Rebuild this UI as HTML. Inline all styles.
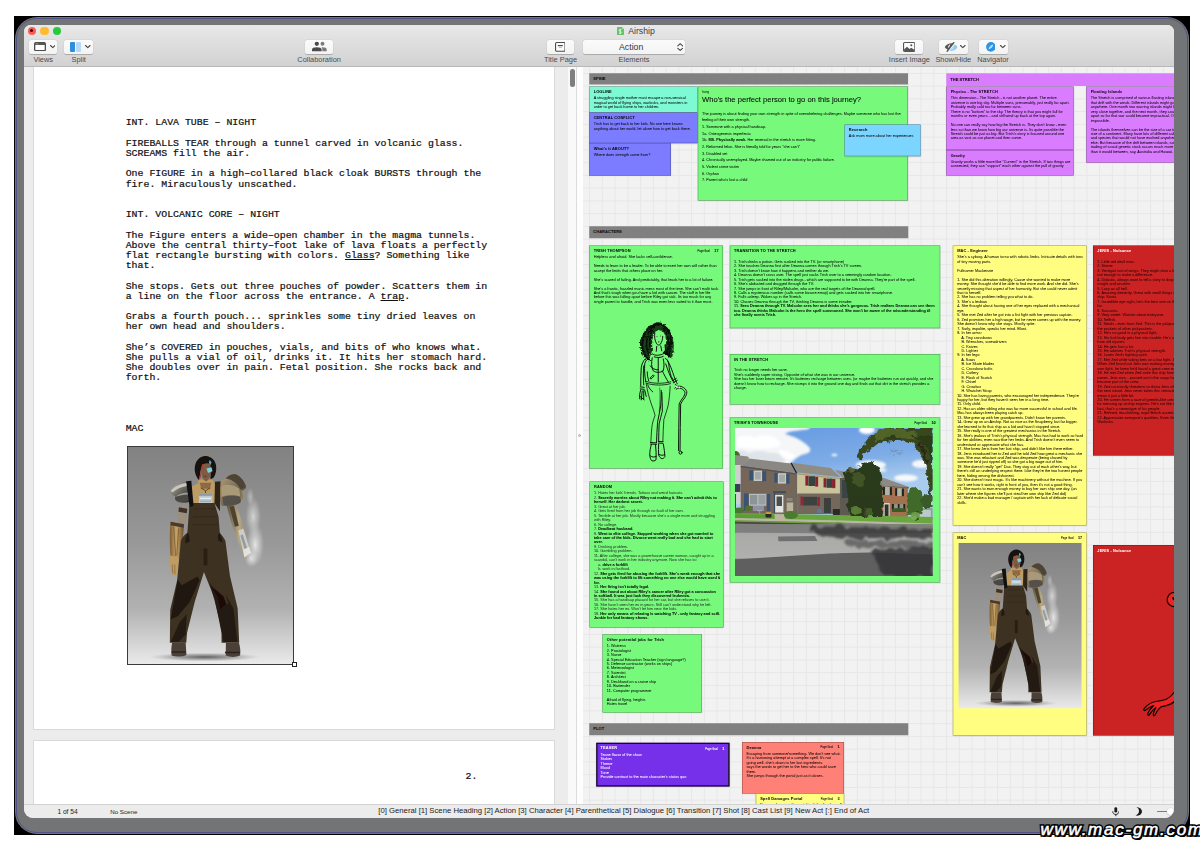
<!DOCTYPE html>
<html>
<head>
<meta charset="utf-8">
<title>Airship</title>
<style>
*{box-sizing:border-box;margin:0;padding:0}
html,body{width:1200px;height:843px;overflow:hidden;background:#fff}
body{font-family:"Liberation Sans",sans-serif;position:relative;color:#000}
.abs{position:absolute}
#blk{left:14px;top:16px;width:1176px;height:819px;background:#000}
#frm{left:15px;top:17px;width:1174px;height:817px;background:#727475;border-radius:22px}
#frl{left:16px;top:18px;width:1172px;height:815px;border:1px solid #4c4d88;border-radius:21px;opacity:.85}
#win{left:24px;top:25px;width:1150px;height:793px;border-radius:6.5px 6.5px 9px 9px;overflow:hidden;background:#ececec}
/* toolbar */
#tb{left:0;top:0;width:1150px;height:42px;background:linear-gradient(#e9e8e9,#d3d2d3);border-bottom:1px solid #b9b8b9}
.tl{width:8.2px;height:8.2px;border-radius:50%;top:2px}
.btn{top:15px;height:13.5px;background:linear-gradient(#fbfbfb,#f3f3f3);border-radius:2.5px;box-shadow:0 0.5px 0.7px rgba(0,0,0,.2),0 0 0 0.4px rgba(0,0,0,.05)}
.lbl{top:30px;font-size:7.4px;line-height:9px;color:#4a4a4a;text-align:center;white-space:nowrap;transform:translateX(-50%)}
/* left pane */
#lp{left:0;top:42px;width:552px;height:737px;background:#ececec;overflow:hidden}
.page{left:9px;width:521.5px;background:#fff;border:0.7px solid #d9d9d9}
.scr{font-family:"Liberation Mono",monospace;font-size:9.9px;line-height:10.2px;white-space:pre;color:#111;-webkit-text-stroke:0.22px #111}
/* board */
#bd{left:558.7px;top:42px;width:591.3px;height:737px;background-color:#f2f2f2;overflow:hidden;
background-image:linear-gradient(to right,#e7e7e7 0.9px,transparent 0.9px),linear-gradient(to bottom,#e7e7e7 0.9px,transparent 0.9px);background-size:12.75px 12.75px;background-position:6.1px 5.9px}
#bdi{position:absolute;left:0;top:0;width:2400px;height:3000px;transform:scale(.25);transform-origin:0 0}
.hd{background:#808080;font-size:16px;font-weight:bold;line-height:45px;padding-left:16px;color:#111;letter-spacing:.2px;-webkit-text-stroke:.3px #111}
.hp{background:#da7cff;color:#1a0a22;line-height:50px}
.cd{box-shadow:0 2px 5px rgba(0,0,0,.13);border:2.2px solid rgba(0,0,0,.42);font-size:15.28px;line-height:17.85px;padding:10.2px 15.4px;overflow:hidden;white-space:pre;color:#0a0a0a;-webkit-text-stroke:.12px currentColor}
.cd b.t{display:block;font-size:15.6px;letter-spacing:.5px;margin-bottom:7px}
.g{background:#77f97b}.aq{background:#7dfad4}.bl{background:#7b7cff}.lb{background:#7bd5ff}.pu{background:#da7cff}.ye{background:#fffe80}.rd{background:#cb2323;color:#2a0606}.sa{background:#ff8076}.vi{background:#7730ea;color:#fff}
.pg{position:absolute;right:16px;top:9px;font-size:10.5px;color:#111;-webkit-text-stroke:.2px #111}
.vi .pg,.vi .pg b{color:#fff;-webkit-text-stroke:.2px #fff}
.vi{padding:7.2px 12.4px}
.pg b{font-size:15.2px;margin-left:18px}
.ir{display:block;font-size:12.4px;line-height:17.8px}
.big{display:block;font-size:30.4px;line-height:36px;margin-top:4px;-webkit-text-stroke:.25px #0a0a0a}
.rt{line-height:26.7px;margin-top:24.8px}
.ph{position:absolute;left:19px;top:39.4px;width:791.5px;height:592px}
.tr{position:absolute;left:-2.2px;top:-2.2px;width:535.2px;height:892px}
.dim{color:#2c3a2c}.dim b{color:#000}
.wm{left:1040.500px;top:819.800px;font-style:italic;font-size:17px;line-height:20px;letter-spacing:1.750px;white-space:nowrap;color:#fff}
/* status */
#sb{left:0;top:779px;width:1150px;height:14px;background:#ececec;border-top:0.8px solid #d2d2d2;font-size:7.4px;line-height:11px;color:#222;white-space:nowrap}
</style>
</head>
<body>
<svg width="0" height="0" style="position:absolute">
<defs>
<linearGradient id="mbg" x1="0" y1="0" x2="0" y2="1"><stop offset="0" stop-color="#828282"/><stop offset=".45" stop-color="#999"/><stop offset=".75" stop-color="#b2b2b2"/><stop offset=".92" stop-color="#d8d8d8"/><stop offset="1" stop-color="#eaeaea"/></linearGradient>
<radialGradient id="mfl" cx=".5" cy=".5" r=".5"><stop offset="0" stop-color="#333" stop-opacity=".75"/><stop offset=".6" stop-color="#555" stop-opacity=".35"/><stop offset="1" stop-color="#888" stop-opacity="0"/></radialGradient>
<radialGradient id="mst" cx=".5" cy=".5" r=".5"><stop offset="0" stop-color="#f2f2f2" stop-opacity=".85"/><stop offset=".6" stop-color="#e0e0e0" stop-opacity=".4"/><stop offset="1" stop-color="#ccc" stop-opacity="0"/></radialGradient>
<linearGradient id="mgo" x1="0" y1="0" x2="1" y2="0"><stop offset="0" stop-color="#7a5c32"/><stop offset=".45" stop-color="#c9a468"/><stop offset="1" stop-color="#6a4e2a"/></linearGradient>
<linearGradient id="msh" x1="0" y1="0" x2="1" y2="1"><stop offset="0" stop-color="#bdbab1"/><stop offset=".45" stop-color="#6e6b63"/><stop offset="1" stop-color="#2e2c29"/></linearGradient>
<linearGradient id="msr" x1="0" y1="0" x2="1" y2="1"><stop offset="0" stop-color="#b5a27c"/><stop offset=".5" stop-color="#7d705a"/><stop offset="1" stop-color="#3a342b"/></linearGradient>
<linearGradient id="mar" x1="0" y1="0" x2="1" y2="0"><stop offset="0" stop-color="#5e5038"/><stop offset=".5" stop-color="#b7a885"/><stop offset="1" stop-color="#7c7365"/></linearGradient>
<symbol id="mac" viewBox="0 0 166 218" preserveAspectRatio="none">
<rect width="166" height="218" fill="url(#mbg)"/>
<ellipse cx="77" cy="211" rx="56" ry="4.500" fill="url(#mfl)"/>
<!-- steam -->
<ellipse cx="126" cy="70" rx="8" ry="20" fill="url(#mst)" opacity=".8"/>
<ellipse cx="128" cy="98" rx="9" ry="22" fill="url(#mst)"/>
<ellipse cx="124" cy="112" rx="7" ry="9" fill="url(#mst)" opacity=".9"/>
<ellipse cx="123" cy="50" rx="4" ry="9" fill="url(#mst)" opacity=".5"/>
<!-- right mech arm -->
<path d="M99 58l9-2 6 17 4 16 6 18-7 4-8-21-5-14z" fill="url(#mar)"/>
<path d="M111 84l5-2 8 25-7 4z" fill="#cfccc4"/>
<path d="M113 89l2.500-1 5 16-2.500 1z" fill="#8f9ea6"/>
<path d="M102 60l4.500-1 5 20-4 1z" fill="#4e432f"/>
<path d="M116 103l6-2.500 2 6-7 4z" fill="#e4e2dc"/>
<!-- right shoulder -->
<path d="M92.500 36c4-5 10-9 15-9.500 6 2 10 8 11.500 13.500-1 3-3 4-5 4 1 4 0 9-1 12-6 3-13 4-19 3-2-8-3-16-2-23z" fill="url(#msr)"/>
<path d="M98 31.500c3-3 6.500-4.500 10-4.500 5 2 9 7 10.500 13l-5 3c-3-6-8-10-15.500-11.500z" fill="#4e4436"/>
<path d="M94 39c6-2 13-1 18 3l1 8c-6-2-13-2-19 0z" fill="#a89978"/>
<path d="M95 50.500c6-2 12-2 18 0l-2 6.500c-5 2-11 2-15 1z" fill="#55514a"/>
<path d="M113 42c2 2 3 6 2.500 10l-2.500 1z" fill="#8a7a50"/>
<!-- left shoulder -->
<path d="M42.500 45c1-4 5-7.500 10-9 3-1 6-1.300 8.500-1l1.500 20c-4 1.500-9 1.500-13 0-2-1.500-2.500-3.500-2-5.500-2.500-.8-4.500-2.300-5-4.500z" fill="url(#msh)"/>
<path d="M43 44.500c3-4.500 9-7.500 17-8.500l.3 3c-6 1-11.500 3-15.300 6.500z" fill="#c9c7bf"/>
<path d="M47.500 51c2-3.500 7-5.500 13-5.500l.5 8.500c-5 1.500-10 1-13.500-1z" fill="#4a4844"/>
<path d="M48 50c3-3 7.500-4.300 12.500-4.300l.1 2c-5 0-9 1.300-12.600 2.300z" fill="#9d9b94"/>
<!-- left arm -->
<path d="M51 58l9 1-2.500 19-7.500-1c0-7 .5-13 1-19z" fill="#9c8d7c"/>
<path d="M51.200 60.500l8.500 1.500-.6 4.500-8.300-1.500z" fill="#3b332b"/>
<path d="M42.800 75l13.500 2.500c-.5 12-2.500 24-5 35l-8.500-1c-1-12-1-25 0-36.500z" fill="url(#mgo)"/>
<path d="M43 75l13.300 2.500-.4 3.500-13-2.500z" fill="#4a3a2a"/>
<path d="M46 80l2 30M51 82l-2 27" stroke="#6d5230" stroke-width=".7" fill="none"/>
<path d="M42 109l8.500 1.500c1 5 .5 11-1 16-1.500 3-3.500 3.500-5 1.500-2-5-3-12-2.500-19z" fill="#c09c62"/>
<path d="M44.500 118l.5 9M47 118l.3 10" stroke="#7a5c34" stroke-width=".6" fill="none"/>
<!-- neck/chest -->
<path d="M71 33l14 0 2 4c3 1 6 2 7 4l-2 17-27 0-2-17c2-2 5-3 7-4z" fill="#bf9c63"/>
<path d="M72 36l12 0-2 6-8 0z" fill="#8c6a42"/>
<path d="M73 41l5 3 5-3M78 44v3" stroke="#5a4026" stroke-width=".9" fill="none"/>
<rect x="71.300" y="46.500" width="13.600" height="10.500" fill="#b9c9cf"/>
<rect x="71.300" y="46.500" width="13.600" height="2.500" fill="#8a9aa0"/>
<rect x="72.500" y="51" width="11" height="1.200" fill="#e8f0f2"/>
<rect x="72.500" y="54" width="11" height="1" fill="#93a5ab"/>
<!-- overalls -->
<path d="M65.500 56.300h21.500l4.100 13.700 1.300 16.300c2.500 2.500 4.500 5.200 5.600 8.200l4.600 35 7.700 32.400 1.600 34.700-17.800 0 0-10.100-6.900-33.900-10.800-27-9.300 30.100-7.700 30.800-.8 10.100-16.500 0 .4-33.200 6.900-29.400 3.800-40c1.200-3.200 3.200-5.700 6.500-7.700l2-27z" fill="#3d3122"/>
<path d="M58.500 34.500l5.200-.5 2.300 25-4 1.500z" fill="#111"/>
<path d="M87.500 35l5.500-.5-.5 30-5.500-8z" fill="#2f2418"/>
<path d="M66 62l22 0M65.500 70h24M65 78h26" stroke="#2e2216" stroke-width=".5" fill="none"/>
<path d="M76 102h3.800v17H76z" fill="#2a1e14"/>
<path d="M60 86c-2 4-3 8-2 11l4-2c0-3 0-6-2-9zM92 86c2 4 3 7 3 10l-4-2c-1-3-1-5 1-8z" fill="#1c140d" opacity=".8"/>
<path d="M50 133l4 6 16-9 2 4-10 22-12 14-7 3z" fill="#1d150e" opacity=".9"/>
<path d="M52 176l7-8-1 20-7 8-8 0z" fill="#1d150e" opacity=".8"/>
<path d="M82 136l8 12 4 14 7-5-3-9 8 14 4 34-14 0-4-22-5-20z" fill="#1f1610" opacity=".85"/>
<path d="M84 140l6 10 3 13 6-5-3-8z" fill="#1a0808" opacity=".95"/>
<!-- boots -->
<path d="M44.500 196.500l13.500 0 .8 12.500c-4 2-10.500 2-15 .5-.5-4.500-.3-8.500.7-13z" fill="#4a4038"/>
<path d="M98.500 196.500l13 0c1.500 4.500 1.800 9 1.300 13-4.500 1.800-10 1.800-14.500 0z" fill="#4a4038"/>
<path d="M44 206h14M97.500 206.500h15" stroke="#2a231d" stroke-width="1.600"/>
<!-- head -->
<path d="M71.500 33.500c-4-5-5.500-11-3.500-17 2-5 6-7.500 10.500-7.500 5 .5 9 4 10 9 .8 5 0 9-2.500 13l-3 1.500 0-12-8-3-2 6z" fill="#151210"/>
<path d="M74.500 18.500c2-2.200 5.500-2.700 8.300-1.300l.9 8.500c-.5 4-2.300 7.300-4.700 8.800-2.800-.5-4.600-3.500-5-7.300z" fill="#7d5c43"/>
<path d="M74.500 17l1.200.3-2.700 14-1-.5z" fill="#b23a2a"/>
<path d="M79 21.500l5-1.200 1 4-4.500 1.800z" fill="#7fd0de"/>
<path d="M82 13l2 2-1 3-1.500-2z" fill="#58b6cf"/>
<path d="M76 29.500h3" stroke="#4d2f22" stroke-width=".7"/>
</symbol>
</defs>
</svg>
<div id="blk" class="abs"></div>
<div id="frm" class="abs"></div>
<div id="frl" class="abs"></div>
<div id="win" class="abs">

<!-- TOOLBAR -->
<div id="tb" class="abs">
  <div class="abs tl" style="left:3.6px;background:#fc5b57;top:1.7px"></div>
  <div class="abs" style="left:6.2px;top:4.2px;width:3px;height:3px;border-radius:50%;background:#3a0705"></div>
  <div class="abs tl" style="left:16.4px;background:#fdbc2e;top:1.7px"></div>
  <div class="abs tl" style="left:29.1px;background:#28c83f;top:1.7px"></div>

  <!-- title -->
  <svg class="abs" style="left:593px;top:2px" width="7" height="8.4" viewBox="0 0 7 8.4"><path d="M0.5 0h4.6l1.9 1.9v5.9a.6.6 0 0 1-.6.6H0.5a.5.5 0 0 1-.5-.5V.5A.5.5 0 0 1 .5 0z" fill="#69c26d"/><path d="M5.1 0v1.9H7z" fill="#b7e3b9"/><path d="M4.3 2.6c-1.2-.5-2 .1-2 .9 0 1 1.800.9 1.800 2 0 .7-.7 1.200-1.900.8M3.200 2v4.800" stroke="#fff" stroke-width=".8" fill="none"/></svg>
  <div class="abs" style="left:604.2px;top:0.5px;font-size:8.7px;line-height:11px;color:#3c3c3c">Airship</div>

  <!-- Views -->
  <div class="abs btn" style="left:4.7px;width:28.8px"></div>
  <svg class="abs" style="left:10px;top:17px" width="12" height="9.400" viewBox="0 0 12 9.4"><rect x=".65" y=".65" width="10.700" height="8.100" rx="1.300" fill="#fff" stroke="#4c4c4c" stroke-width="1.300"/><path d="M.6 1.500a.9.9 0 0 1 .9-.9h9a.9.9 0 0 1 .9.900v1.600H.6z" fill="#555"/><rect x="1.700" y="1.500" width="1" height=".8" fill="#cfcfcf"/><rect x="3.200" y="1.500" width="1" height=".8" fill="#cfcfcf"/></svg>
  <svg class="abs" style="left:25.6px;top:20.2px" width="5.600" height="3.400" viewBox="0 0 5.600 3.400"><path d="M.5.5l2.300 2.200L5.100.5" stroke="#444" stroke-width="1.05" fill="none" stroke-linecap="round" stroke-linejoin="round"/></svg>
  <div class="abs lbl" style="left:19.200px">Views</div>

  <!-- Split -->
  <div class="abs btn" style="left:40.200px;width:28.900px"></div>
  <div class="abs" style="left:46.300px;top:17px;width:4.700px;height:10px;border-radius:1px;background:#2e8fd8"></div>
  <div class="abs" style="left:52.200px;top:17px;width:4.700px;height:10px;border-radius:1px;background:#b5d9f7"></div>
  <svg class="abs" style="left:61px;top:20.200px" width="5.600" height="3.400" viewBox="0 0 5.600 3.400"><path d="M.5.5l2.300 2.200L5.100.5" stroke="#444" stroke-width="1.05" fill="none" stroke-linecap="round" stroke-linejoin="round"/></svg>
  <div class="abs lbl" style="left:54.700px">Split</div>

  <!-- Collaboration -->
  <div class="abs btn" style="left:281px;width:28.300px"></div>
  <svg class="abs" style="left:286.500px;top:16px" width="17" height="11" viewBox="0 0 17 11"><circle cx="5.800" cy="2.800" r="2.150" fill="#4a4a4a"/><path d="M1 10.300V8.600C1 7 2.800 6.200 5.800 6.200s4.800.8 4.800 2.400v1.700z" fill="#4a4a4a"/><circle cx="11.500" cy="2.800" r="1.950" fill="#7a7a7a"/><path d="M10.600 6.300c.3-.05.600-.1.900-.1 2.600 0 4.200.8 4.200 2.400v1.700h-4.400V8.600c0-.9-.2-1.700-.7-2.300z" fill="#7a7a7a"/></svg>
  <div class="abs lbl" style="left:295.100px">Collaboration</div>

  <!-- Title Page -->
  <div class="abs btn" style="left:523px;width:27px"></div>
  <svg class="abs" style="left:530.800px;top:16.800px" width="10.600" height="9.800" viewBox="0 0 10.600 9.800"><rect x=".55" y=".55" width="9.500" height="8.700" rx="1.200" fill="#fdfdfd" stroke="#4c4c4c" stroke-width="1.100"/><rect x="2.800" y="3" width="5" height="1.200" fill="#4c4c4c"/><rect x="3.800" y="5.200" width="3" height=".6" fill="#9a9a9a"/></svg>
  <div class="abs lbl" style="left:536.500px">Title Page</div>

  <!-- Action dropdown -->
  <div class="abs btn" style="left:559px;width:102px"></div>
  <div class="abs" style="left:595px;top:15.600px;font-size:8.750px;line-height:12px;color:#333">Action</div>
  <svg class="abs" style="left:652.800px;top:17.800px" width="6.400" height="8.200" viewBox="0 0 6.400 8.200"><path d="M.8 2.900L3.200.7l2.400 2.200M.8 5.300l2.400 2.200 2.400-2.200" stroke="#444" stroke-width="1.05" fill="none" stroke-linecap="round" stroke-linejoin="round"/></svg>
  <div class="abs lbl" style="left:610px">Elements</div>

  <!-- Insert Image -->
  <div class="abs btn" style="left:871.200px;width:27.700px"></div>
  <svg class="abs" style="left:878.800px;top:16.600px" width="12.400" height="10" viewBox="0 0 12.400 10"><rect x=".55" y=".55" width="11.300" height="8.900" rx="1.100" fill="#fdfdfd" stroke="#555" stroke-width="1.100"/><path d="M1.100 8.900V7.300l2.900-2.600 2.500 2.200 1.700-1.200 3.100 2.100v1.100z" fill="#555"/><circle cx="8.300" cy="3.300" r="1.050" fill="#555"/></svg>
  <div class="abs lbl" style="left:885.400px">Insert Image</div>

  <!-- Show/Hide -->
  <div class="abs btn" style="left:915.200px;width:28.500px"></div>
  <svg class="abs" style="left:920px;top:16px" width="14" height="11.500" viewBox="0 0 14 11.500"><path d="M.7 6C2 3.600 4.800 2.300 8 2.200L9.700 1l1.100.6-7.300 9.400-1.300-.5 1.400-1.900C2.300 8 1.300 7.100.7 6z" fill="#555"/><path d="M4.300 6.900c-.5-1.600.3-3.100 2.100-3.600L5.100 6.200z" fill="#f4f4f4"/><path d="M10.700 3.600c1.200.6 2.100 1.500 2.700 2.600-1.100 2.200-3.600 3.700-6.800 3.700-.3 0-.6 0-.9-.1z" fill="#8fcaf3"/><path d="M9.600 5.200c.6 1.300.1 2.800-1.200 3.500-.4.200-.9.300-1.300.3z" fill="#bfe2fa"/></svg>
  <svg class="abs" style="left:936.300px;top:20.200px" width="5.600" height="3.400" viewBox="0 0 5.600 3.400"><path d="M.5.500l2.300 2.200L5.100.5" stroke="#444" stroke-width="1.05" fill="none" stroke-linecap="round" stroke-linejoin="round"/></svg>
  <div class="abs lbl" style="left:929.300px">Show/Hide</div>

  <!-- Navigator -->
  <div class="abs btn" style="left:955px;width:28.500px"></div>
  <svg class="abs" style="left:961.500px;top:16.900px" width="9.800" height="9.800" viewBox="0 0 9.800 9.800"><circle cx="4.900" cy="4.900" r="4.800" fill="#2d93e3"/><path d="M7.300 2.500L5.700 5.700 2.500 7.300 4.100 4.100z" fill="#fff"/><circle cx="4.900" cy="4.900" r=".7" fill="#2d93e3"/></svg>
  <svg class="abs" style="left:976.200px;top:20.200px" width="5.600" height="3.400" viewBox="0 0 5.600 3.400"><path d="M.5.500l2.300 2.200L5.100.5" stroke="#444" stroke-width="1.05" fill="none" stroke-linecap="round" stroke-linejoin="round"/></svg>
  <div class="abs lbl" style="left:969px">Navigator</div>
</div>

<!-- LEFT PANE -->
<div id="lp" class="abs">
  <div class="abs page" style="top:-3px;height:666.4px"></div>
  <div class="abs page" style="top:673.4px;height:80px"></div>
  <div class="abs scr" style="left:101.700px;top:51.300px">INT. LAVA TUBE – NIGHT

FIREBALLS TEAR through a tunnel carved in volcanic glass.
SCREAMS fill the air.

One FIGURE in a high–collared black cloak BURSTS through the
fire. Miraculously unscathed.


INT. VOLCANIC CORE – NIGHT

The Figure enters a wide–open chamber in the magma tunnels.
Above the central thirty–foot lake of lava floats a perfectly
flat rectangle bursting with colors. <u>Glass</u>? Something like
that.

She stops. Gets out three pouches of powder. Scatters them in
a line on the floor across the entrance. A <u>trap</u>.

Grabs a fourth pouch... sprinkles some tiny dried leaves on
her own head and shoulders.

She’s COVERED in pouches, vials, and bits of who knows what.
She pulls a vial of oil, drinks it. It hits her stomach hard.
She doubles over in pain. Fetal position. She rocks back and
forth.




MAC</div>
  <div class="abs" style="left:103.300px;top:378.500px;width:167px;height:219px;border:0.8px solid #3a3a3a;background:#999"><svg width="100%" height="100%" style="display:block"><use href="#mac" width="100%" height="100%"/></svg></div>
  <div class="abs" style="left:267.500px;top:594.500px;width:5px;height:5px;border:0.8px solid #222;background:#fff"></div>
  <div class="abs scr" style="left:441.500px;top:704.500px">2.</div>
</div>

<!-- DIVIDER -->
<div class="abs" style="left:543.8px;top:42px;width:8.5px;height:737px;background:#f9f9f9"></div>
<div class="abs" style="left:552.2px;top:42px;width:6.5px;height:737px;background:#fdfdfd;border-left:0.7px solid #dcdcdc"></div>

<div class="abs" style="left:545.600px;top:44.200px;width:5px;height:18px;border-radius:2.500px;background:#7e7e7e"></div>
<div class="abs" style="left:553.900px;top:408.700px;width:3.600px;height:3.600px;border-radius:50%;background:#d8d8d8;border:0.800px solid #b0b0b0"></div>
<!-- BOARD -->
<div id="bd" class="abs">
<!--BOARD-START-->
<div id="bdi">
<div class="abs hd" style="left:25.2px;top:25.2px;width:1274.8px;height:45.2px">SPINE</div>
<div class="abs hd hp" style="left:1453.2px;top:25.2px;width:936px;height:50.4px">THE STRETCH</div>
<div class="abs cd aq" style="left:25.2px;top:77.6px;width:434px;height:104px"><b class="t">LOGLINE</b>A struggling single mother must escape a non-sensical
magical world of flying ships, warlocks, and monsters in
order to get back home to her children.</div>
<div class="abs cd bl" style="left:25.2px;top:181.6px;width:434px;height:123.6px"><b class="t">CENTRAL CONFLICT</b>Trish has to get back to her kids. No one here knows
anything about her world, let alone how to get back there.</div>
<div class="abs cd bl" style="left:25.2px;top:305.2px;width:326.8px;height:129.6px"><b class="t">What's it ABOUT?</b>Where does strength come from?</div>
<div class="abs cd g" style="left:458.8px;top:77.6px;width:841.2px;height:456px"><span class="ir">Irony</span><span class="big">Who's the perfect person to go on this journey?</span><div class="rt">The journey is about finding your own strength in spite of overwhelming challenges. Maybe someone who has lost the
feeling of their own strength.
1. Someone with a physical handicap.
1a. Osteogenesis imperfecta
1b. <b>MS. Physically weak.</b> Her reversal in the stretch is more fitting.
2. Reformed felon. She is literally told for years "she can't"
3. Disabled vet
4. Chronically unemployed. Maybe shamed out of an industry for public failure.
5. Violent crime victim
6. Orphan
7. Parent who's lost a child</div></div>
<div class="abs cd lb" style="left:1046px;top:229.6px;width:304.8px;height:127.6px"><b class="t">Research</b>Ask mom more about her experiences</div>
<div class="abs cd pu" style="left:1453.2px;top:77.6px;width:510px;height:254.4px"><b class="t">Physics - The STRETCH</b>This dimension - The Stretch - is not another planet. The entire
universe is one big sky. Multiple suns, presumably, just really far apart.
Probably really cold too far between suns.
There is no "bottom" to the sky. The theory is that you might fall for
months or even years... and still wind up back at the top again.

No one can really say how big the Stretch is. They don't know - even
less so than we know how big our universe is. Its quite possible the
Stretch could be just as big. But Trish's story is focused around one
area as vast as our planet and then some.</div>
<div class="abs cd pu" style="left:1453.2px;top:332px;width:510px;height:101.6px"><b class="t">Gravity</b>Gravity works a little more like "Current" in the Stretch. If two things are
connected, they can "support" each other against the pull of gravity</div>
<div class="abs cd pu" style="left:2013.2px;top:77.6px;width:384px;height:305.6px"><b class="t">Floating Islands</b>The Stretch is comprised of various floating islands
that drift with the winds. Different islands might go
anywhere. One month two warring islands might be
very close together, and the next month, they could be
apart so far that war could become impractical. Or
impossible.

The islands themselves can be the size of a car to the
size of a continent. Many have lots of different cultures
and species that would not have evolved anywhere
else. But because of the drift between islands, social
trading of social genetic stock occurs much more often
than it would between, say, Australia and Hawaii.</div>
<div class="abs hd" style="left:25.2px;top:636.8px;width:1274.8px;height:46px">CHARACTERS</div>
<div class="abs cd g" style="left:25.2px;top:713.6px;width:535.2px;height:892px"><span class="pg">Page Goal<b>17</b></span><b class="t">TRISH THOMPSON</b>Helpless and afraid. She lacks self-confidence.

Needs to learn to be a leader. To be able to exert her own will rather than
accept the limits that others place on her.

She's scared of failing. And predictably, that leads her to a lot of failure.

She's a frantic, frazzled manic mess most of the time. She can't multi task.
And that's tough when you have a kid with cancer. The stuff in her life
before this was falling apart before Riley got sick. Its too much for any
single parent to handle, and Trish was even less suited to it than most.<svg class="tr" viewBox="589 245.400 133.800 223" preserveAspectRatio="none">
<defs><filter id="tcurl" x="-30%" y="-30%" width="160%" height="160%"><feTurbulence type="fractalNoise" baseFrequency=".45" numOctaves="2" seed="3" result="n"/><feDisplacementMap in="SourceGraphic" in2="n" scale="3.600" xChannelSelector="R" yChannelSelector="G"/></filter></defs>
<!-- hair -->
<g filter="url(#tcurl)" fill="none" stroke="#070b07" stroke-linecap="round">
<path d="M659 324c-5-1-10 1-13 5-4 5-6 11-5.500 17 .5 5 2 9 5 12l3 3c1-3 2-6 3-9 .5-3 .5-6 .5-9 0-4 1-8 3-11 2-2 5-2 7-1 3 3 4 7 4 11-.5 4-1 7-2 10 1 2 3 4 5 5 1 1 2 1 3 0 1-3 1.500-7 1.500-11 0-5-1-9-3-13-2-5-6-8-12-9z" fill="#070b07" stroke="none" opacity=".8"/>
<path d="M658 324.500c-5 0-9 3-12 7-3 5-4 10-4 15" stroke-width="1.700"/>
<path d="M655 326c-4 2-7 6-8 11-1 5-1 10 0 15" stroke-width="1.500"/>
<path d="M652.500 329c-2 4-3 9-3 14 0 4 0 8-1 12" stroke-width="1.400"/>
<path d="M642 344c0 5 1.500 10 5 14M644 352c1 4 3 7 5 9" stroke-width="1.500"/>
<path d="M640.500 340c-.5 6 .5 12 3 17" stroke-width="1.200"/>
<path d="M659 324c4 1 7 3 9 7 2 4 3 9 3 14" stroke-width="1.600"/>
<path d="M663 328c3 3 4.500 7 5 12 .5 5 0 9-1 13" stroke-width="1.500"/>
<path d="M665 345c0 4 1 8 3.500 11M669.500 343c.5 5 0 10-1.500 14" stroke-width="1.400"/>
<path d="M664 352c1 2 3 4 5 5" stroke-width="1.300"/>
<path d="M653 325c3-2 7-2 10 0" stroke-width="1.600"/>
</g>
<g fill="none" stroke="#060c07" stroke-width=".95" stroke-linecap="round" stroke-linejoin="round">
<!-- face -->
<path d="M654.500 333c-.5 4 0 8 2 11 1 1.500 2.500 1.500 3.500.5 1.500-2 2.500-5 2.500-8"/>
<path d="M656.500 346.500l-.5 5M660.500 346l1 5"/>
<!-- neck/collar -->
<path d="M652 354c3 2 7 2 12-.5M654 357c3 1 6 1 9-.5"/>
<!-- torso -->
<path d="M649 358c-2 1-4 3-4.500 6-.5 6 0 12 1 18M665 358.500c2 1 3 3 3.500 6 .5 4 1 8 2.500 12 1 2 2 4 3 6"/>
<path d="M652 358c-1 5-1 9 1 13 3 2 7 2 10 0 1-4 1-8 0-12"/>
<path d="M650 366c2 3 5 4 8 4M658 358v24M662 371c2 4 4 8 6 11"/>
<path d="M647 372c0 3 .5 6 1.500 9M650 378l3-3 1 1-3 3z"/>
<path d="M645.500 381.500c8 2.500 17 2.500 25 .5M645.800 383.300c8 2.500 17 2.500 24.500.5" stroke-width=".8"/>
<!-- left arm -->
<path d="M645 359c-2 2-3.500 5-4 9-.5 6-.5 12-.5 18M643.500 366c-.5 6-.5 12 0 19"/>
<path d="M640 387l4 .5M640 389l4 .5M640.500 390c-1 3-1.500 6-1 9M642 391l-1 9M643.500 391l0 8M644.500 390.500l1.500 6M639 396l5 4"/>
<!-- right arm -->
<path d="M667 360c3 5 5 11 7 17 1 3 2 5 3 7M665.500 364c2 6 4 12 7 17"/>
<path d="M672 381l4-2.500M673 383l4-2.500M675 384.500c1 .5 2 1.500 3 3"/>
<!-- legs -->
<path d="M646 384c1 7 3 14 5 20 1.500 4 3 8 3.800 11.500-1.500 4-2.800 8-3.200 12-.5 5-.8 10-1 15.200" stroke-width=".75"/>
<path d="M647.500 385c1 3 2.500 5 5 7M661 390.500c0 5.500-.2 10.500-.5 15.600-.8 5.400-2.200 10.500-3.100 15.700-.6 7-.9 14-1.100 20.900"/>
<path d="M669.900 386.300c-.3 7-1 13.500-2.100 19.800-1.200 4.700-2.800 9.200-4.200 13.600-.5 7.300-.8 14.600-1 21.900" stroke-width=".75"/>
<path d="M661.600 392.500c.3 6.300.4 12.600.5 18.800-1 4.200-2.300 8.400-3.200 12.600-.3 5.900-.4 11.800-.5 17.700"/>
<path d="M659.500 388c.5 8 .3 16-.5 24" stroke-width=".5"/>
<path d="M650.400 442.700l6 .3M650.300 444.200l6 .3M658.300 441.600l4.400.2M658.300 443.200l4.400.2"/>
<!-- feet -->
<path d="M651.100 444.500c-1 3.500-1.600 7-1.600 10.700.2 2.500.9 4.500 2.100 5.700 1.500.5 3 .2 4.200-1 .3-5 0-10-.5-15M650 456c2 1.500 4 1.500 6 .5"/>
<path d="M658.400 444c-.2 3.700-.2 7.500 0 11.200.8 1.900 1.900 3.100 3.200 3.700 1.300-.2 2.400-.9 3.100-2.100-.3-4.200-.8-8.400-1.600-12.600M658.600 454.500c2 1.200 4 1.200 5.800.3"/>
<!-- cane -->
<path d="M674.500 388.300c2-2 4.500-2.500 7-1.500 2.500 1 4.500 3 5 5 .3 2.200-.8 4.200-2 6.200-1.600 2-3.200 4-4.100 6.200-.3 15.600-.5 31.200-.6 46.800"/>
<path d="M676 389.300c1.500-1 3.500-1.300 5-.6 2 1 3.200 2.300 3.700 3.800.1 1.700-.7 3.400-1.800 5.100-1.600 2.100-3.200 4.300-4 6.600-.3 15.500-.5 31-.6 46.500"/>
<circle cx="680.300" cy="452.800" r="1.500"/>
</g>
<circle cx="676.500" cy="387" r="1" fill="#e8f4e8"/><circle cx="679" cy="387.600" r=".9" fill="#e8f4e8"/>
<circle cx="656.800" cy="336.600" r=".55" fill="#5a2a6a"/><circle cx="660.300" cy="336.200" r=".55" fill="#5a2a6a"/><ellipse cx="658.600" cy="342" rx=".6" ry=".9" fill="#5a1a4a"/>
</svg>
</div>
<div class="abs cd g" style="left:586.8px;top:713.6px;width:842px;height:331.6px"><b class="t">TRANSITION TO THE STRETCH</b>
1. Trish drinks a potion. Gets sucked into the TV. (or smartphone)
2. She touches Deanna first after Deanna comes through Trish's TV screen.
3. Trish doesn't know how it happens and neither do we.
4. Deanna doesn't cross over. The spell just sucks Trish over to a seemingly random location.
5. Trish gets sucked into the stolen drugs - which are supposed to be with Deanna. They're part of the spell.
6. She's abducted and dragged through the TV.
7. She jumps in front of Riley/Malcolm, who are the real targets of the Deanna/spell.
8. Calls a mysterious number (calls some bizarre emoji) and gets sucked into her smartphone.
9. Falls asleep. Wakes up in the Stretch.
10. Chases Deanna through the TV, thinking Deanna is some intruder.
11. <b>Sees Deanna through TV. Malcolm sees her and thinks she's gorgeous. Trish realizes Deanna can see them
too. Deanna thinks Malcolm is the hero the spell summoned. She won't be aware of the misunderstanding til
she finally meets Trish.</b></div>
<div class="abs cd g" style="left:586.8px;top:1147.6px;width:842px;height:202px"><b class="t">IN THE STRETCH</b>
Trish no longer needs her cane.
She's suddenly super strong. Opposite of what she was in our universe.
She has her laser beam remote. It's batteries recharge between uses. (or maybe the batteries run out quickly, and she
doesn't know how to recharge. She stomps it into the ground one day and finds out that dirt in the stretch provides a
charge.</div>
<div class="abs cd g" style="left:586.8px;top:1402.4px;width:842px;height:660.4px"><span class="pg">Page Goal<b>10</b></span><b class="t">TRISH'S TOWNHOUSE</b><svg class="ph" viewBox="0 0 198 148" preserveAspectRatio="none">
<defs>
<linearGradient id="hsky" x1="0" y1="0" x2="0.300" y2="1"><stop offset="0" stop-color="#6498e1"/><stop offset=".45" stop-color="#7eace6"/><stop offset=".7" stop-color="#a9cbee"/></linearGradient>
<filter id="hb1" x="-20%" y="-20%" width="140%" height="140%"><feGaussianBlur stdDeviation="1.300"/></filter>
<filter id="hb2" x="-20%" y="-20%" width="140%" height="140%"><feGaussianBlur stdDeviation=".6"/></filter>
<filter id="hb3" x="-20%" y="-20%" width="140%" height="140%"><feGaussianBlur stdDeviation=".35"/></filter>
<filter id="hb4" x="-20%" y="-20%" width="140%" height="140%"><feGaussianBlur stdDeviation="2"/></filter>
<linearGradient id="hrd" x1="0" y1="0" x2="0" y2="1"><stop offset="0" stop-color="#7d7d7d"/><stop offset=".16" stop-color="#858585"/><stop offset=".2" stop-color="#a9a9a8"/><stop offset=".66" stop-color="#b0b0af"/><stop offset=".7" stop-color="#686868"/><stop offset="1" stop-color="#585858"/></linearGradient>
<filter id="hfo" x="-20%" y="-20%" width="140%" height="140%"><feTurbulence type="fractalNoise" baseFrequency=".16" numOctaves="2" seed="4" result="n"/><feDisplacementMap in="SourceGraphic" in2="n" scale="7" xChannelSelector="R" yChannelSelector="G"/><feGaussianBlur stdDeviation=".35"/></filter>
<filter id="hsh" x="-20%" y="-20%" width="140%" height="140%"><feTurbulence type="fractalNoise" baseFrequency=".11" numOctaves="2" seed="9" result="n"/><feDisplacementMap in="SourceGraphic" in2="n" scale="9" xChannelSelector="R" yChannelSelector="G"/><feGaussianBlur stdDeviation=".8"/></filter>
<clipPath id="hcl"><rect width="198" height="148"/></clipPath>
</defs>
<g clip-path="url(#hcl)">
<rect width="198" height="100" fill="url(#hsky)"/>
<!-- clouds -->
<g filter="url(#hb1)">
<path d="M-4-3h78c3 2 1 5-6 5-8 1-14 1-18 4 8 2 17 6 23 12 4 3 3 7-3 8-5 1-9 4-13 8-3 4-9 5-15 4L18 33C10 31 4 29-4 29z" fill="#f4f6f8"/>
<path d="M0 24c6-2 10-2 14 1 6-3 14-3 20 0 6-1 12 1 18 4l-6 8-46-6z" fill="#dfe4ea"/>
<path d="M2 10c5-3 12-3 18 0 6-4 14-4 20 0 4 2 6 5 5 8-10 3-28 3-43 1z" fill="#fff"/>
<path d="M44 22c6 0 12 2 16 6 0 2-3 3-8 3-5-1-8-4-8-9z" fill="#fff"/>
<ellipse cx="136" cy="37" rx="15" ry="4.500" fill="#f4f7fa"/><ellipse cx="146" cy="42" rx="6" ry="2" fill="#e6eef6"/>
<ellipse cx="186" cy="36" rx="9" ry="4" fill="#f4f7fa"/>
<ellipse cx="171" cy="50" rx="12" ry="3.500" fill="#f6f8fb"/>
<ellipse cx="99.500" cy="27" rx="3" ry="1.200" fill="#f4f7fa"/>
<ellipse cx="132" cy="2" rx="8" ry="4" fill="#fff"/>
</g>
<!-- far left green -->
<path d="M0 23c3 0 5 2 5 5H0z" fill="#4a6a2a"/>
<!-- roofs -->
<path d="M0 27l13 1.500 1 2-6 7.500-8-1z" fill="#8e8b86"/>
<path d="M14 30.500l42 5 5 9.500-53-7.200z" fill="#8b8883"/>
<path d="M55.500 35l1.500-.3 5.500 10-1.700.4z" fill="#222"/>
<path d="M57 34.800l39 5.300 10 9.200-44-5z" fill="#8f8c84"/>
<path d="M100 42l14 2 3 8-8-.8z" fill="#908d87"/>
<path d="M116 46.500l33 3.600 25 9-24-1.500-33-4z" fill="#8d8983"/>
<!-- left edge white house -->
<rect x="0" y="37" width="6" height="39" fill="#cfcfd2"/><rect x="0" y="56" width="5.500" height="8" fill="#3a3f52"/>
<rect x="0" y="66" width="1" height="22" fill="#8a2a2a"/>
<!-- brick house left -->
<path d="M5.700 37.800l55.500 7.500V86H5.700z" fill="#75665a"/>
<path d="M5.700 37.800l55.500 7.500v1.400L5.700 39.200z" fill="#5e534b"/>
<g filter="url(#hb3)">
<rect x="14.300" y="42.300" width="4.200" height="10" fill="#3b5272"/><rect x="18.700" y="42.600" width="8.400" height="10.400" fill="#c6cac6"/><rect x="20" y="44" width="5.800" height="7.500" fill="#a4aaa8"/><rect x="27.400" y="43.200" width="3.800" height="10" fill="#3b5272"/>
<rect x="39.400" y="44.800" width="3.400" height="9.800" fill="#3b5272"/><rect x="42.900" y="45.200" width="8.300" height="10.400" fill="#c6cac6"/><rect x="44.200" y="46.600" width="5.800" height="7.500" fill="#a4aaa8"/><rect x="51.300" y="46" width="3.200" height="9.800" fill="#3b5272"/>
<rect x="9" y="65.500" width="4.500" height="17" fill="#3b5272"/><rect x="14" y="65.800" width="17.500" height="12" fill="#b9bec0"/><rect x="15" y="67" width="7.300" height="9.500" fill="#8d9496"/><rect x="23.500" y="67" width="7" height="9.500" fill="#9aa0a2"/><rect x="31.700" y="66" width="3.600" height="17" fill="#3b5272"/>
<rect x="18" y="78" width="11" height="5" fill="#8b93a8"/>
<rect x="38" y="63.200" width="13" height="2" fill="#3a4e63"/><rect x="38.800" y="65" width="1.400" height="20" fill="#3a4e63"/>
<rect x="40.200" y="67" width="8.200" height="17.500" fill="#e4e4e2"/><rect x="41.600" y="68.500" width="5.400" height="9.500" fill="#4a4f4c"/>
<rect x="51.700" y="74.500" width="6.500" height="9" fill="#b8b49c"/><rect x="51.500" y="70" width="6" height="3" fill="#9a9694" opacity=".6"/>
</g>
<rect x="60.500" y="45" width="2" height="41" fill="#6e665e"/>
<!-- cream house -->
<path d="M62.200 45l44 5v16.500h-44z" fill="#c9c49c"/>
<path d="M62.200 45l44 5v1.500l-44-5z" fill="#a6a07e"/>
<path d="M62.200 65.500h44V86h-44z" fill="#74685c"/>
<g filter="url(#hb3)">
<rect x="70.400" y="47.800" width="3" height="9.800" fill="#8b2231"/><rect x="73.500" y="48.200" width="6.600" height="9.800" fill="#39423f"/><rect x="80.200" y="48.800" width="3" height="9.800" fill="#8b2231"/>
<rect x="88.600" y="50.200" width="2.800" height="9.200" fill="#8b2231"/><rect x="91.500" y="50.600" width="6" height="9.200" fill="#39423f"/><rect x="97.600" y="51" width="2.700" height="9.200" fill="#8b2231"/>
<rect x="97.200" y="51" width="3" height="8.600" fill="#8b2231"/>
<rect x="65.500" y="68.500" width="2.600" height="9" fill="#8b2c36"/><rect x="68.200" y="68.800" width="14" height="8.700" fill="#3e4340"/><rect x="82.400" y="69" width="2.600" height="9" fill="#8b2c36"/>
<rect x="89" y="70" width="7" height="15" fill="#3b403c"/>
<rect x="82.500" y="81" width="4" height="4" fill="#5a78c0" opacity=".8"/>
<rect x="98" y="81" width="7" height="6" fill="#2a2c2a"/>
</g>
<path d="M105 50h30v40h-30z" fill="#5d5a52"/><path d="M107 52h7v18h-7z" fill="#3a4444"/><rect x="114" y="58" width="5" height="7" fill="#a9b0a6"/>
<!-- right brick house -->
<path d="M133 57.500l40 2V90h-40z" fill="#a37150"/>
<path d="M116 53.500l34 4 24 1.500v1.500l-58-5z" fill="#6e675e"/>
<g filter="url(#hb3)">
<rect x="148" y="58.800" width="2" height="8" fill="#20221f"/><rect x="150.200" y="59" width="4.600" height="8" fill="#aeb6aa"/><rect x="155" y="59.200" width="2" height="8" fill="#20221f"/>
<rect x="160.300" y="60.200" width="2" height="7.600" fill="#20221f"/><rect x="162.400" y="60.400" width="4.400" height="7.600" fill="#aeb6aa"/><rect x="167" y="60.600" width="2" height="7.600" fill="#20221f"/>
<rect x="148.600" y="75" width="6.200" height="14" fill="#d4d4cc"/><rect x="149.800" y="76.500" width="3.800" height="11.500" fill="#2c332c"/>
<rect x="157" y="76" width="2" height="6.500" fill="#20221f"/><rect x="159.200" y="76.200" width="3.600" height="6" fill="#8e968a"/><rect x="163" y="76" width="1.800" height="6.500" fill="#20221f"/><rect x="164.800" y="76.200" width="3.600" height="6" fill="#8e968a"/><rect x="168.500" y="76" width="1.800" height="6.500" fill="#20221f"/>
<path d="M157 81c4-1.500 9-1.500 14 0v3h-14z" fill="#3a5a28"/>
</g>
<!-- far right bg -->
<rect x="176" y="80" width="22" height="12" fill="#8aa0a0"/><rect x="185" y="82" width="11" height="8" fill="#bcc8cc"/>
<!-- grass -->
<path d="M0 85l198 4v12H0z" fill="#6aa63e"/>
<path d="M0 86.500l40 .5v4L0 90z" fill="#5f9a38"/>
<!-- sidewalk -->
<path d="M0 90l100 2.300 98 3.200v2l-98-3-100-2z" fill="#b9b6a8"/>
<path d="M39.500 86l9.500.3 2 6.800-11-.3z" fill="#beb5a1"/>
<path d="M0 92.200l100 2.300 98 3.500v2.500L0 95z" fill="#6c9c3e"/>
<!-- road -->
<path d="M0 95l100 2.200 98 4.300V148H0z" fill="url(#hrd)"/>
<path d="M0 93.800l100 2.200 98 4.500v1.600l-98-4.400L0 95.600z" fill="#4b463c"/>
<path d="M0 131.500l95-6 40-1 63 2v22H0z" fill="#5e5e5e" filter="url(#hb2)"/>
<path d="M0 96h198v9l-98 .5L0 104.500z" fill="#7f7f7f" opacity=".9" filter="url(#hb2)"/>
<path d="M43 108.500l37-.5 2.500 5-39 .3z" fill="#707070" filter="url(#hb3)"/>
<!-- tree shadows on road -->
<g filter="url(#hsh)" fill="#343435">
<path d="M76 98l122 3v9c-10 1-20 0-30-1-10 2-22 2-32 1-10 2-24 1-34-1-10 0-20-2-26-5z" opacity=".8"/>
<path d="M110 113c10-2 22-1 30 1 10-2 24-2 34 0 8-1 16-1 24 0v6c-10 1-20 1-30-1-10 2-22 2-32 0-8 1-18 0-26-2z" opacity=".55"/>
<path d="M136 123c8-2 16-2 22 0 8-3 20-4 40-4v29h-48c-4-6-6-12-8-16-3-3-6-6-6-9z" opacity=".85"/>
</g>
<!-- bushes & planting -->
<g filter="url(#hb2)">
<ellipse cx="56" cy="87" rx="7" ry="4" fill="#4d7a30"/>
<ellipse cx="4" cy="82.500" rx="5" ry="3" fill="#4c7434"/><ellipse cx="13.500" cy="80.500" rx="3.300" ry="3" fill="#55702f"/>
<rect x="30.500" y="85.500" width="6" height="4" rx="1" fill="#2c2c24"/><rect x="30.800" y="84.200" width="5.500" height="1.800" fill="#c9a23a"/>
<rect x="22" y="82" width="5" height="1.200" fill="#b0a898"/><rect x="24" y="83" width="1.200" height="3.500" fill="#9a9284"/>
</g>
<!-- center tree -->
<g filter="url(#hfo)">
<path d="M109 44c3-3 8-4 12-3 3-4 9-7 14-7 5 1 9 5 10 10 3 3 3 8 1 11 3 4 3 10 1 14 2 5 2 12 0 19H117c-2-6-3-12-2-18-3-3-4-8-2-12-4-3-6-9-4-14z" fill="#2c3a1c"/>
<path d="M118 47c3-3 7-3 10-1 3 3 3 8 0 11-4 2-8 1-10-2-2-3-2-6 0-8z" fill="#4a5a2c" opacity=".8"/>
<path d="M112 42c3-2 6-2 9-1l-3 5c-3 0-5-1-6-4z" fill="#6a6a30" opacity=".8"/>
<path d="M114 70c8-3 22-3 32 0 3 6 3 12 1 18h-32c-2-6-3-12-1-18z" fill="#2b391c"/>
<ellipse cx="121" cy="82" rx="5" ry="4" fill="#587c34"/><ellipse cx="134" cy="84" rx="4" ry="4" fill="#3f5f28"/>
<rect x="129.500" y="80" width="1.800" height="10" fill="#4a4030"/>
</g>
<!-- right trees -->
<g filter="url(#hfo)">
<path d="M173 64c4-5 10-5 13 0 3 5 3 14 1 22-4 3-10 3-14 0-2-8-2-16 0-22z" fill="#416a2c"/>
<rect x="181.500" y="84" width="2.200" height="9" fill="#2e4a1e"/>
<ellipse cx="180" cy="88" rx="5" ry="3" fill="#7cae58" opacity=".8"/>
<path d="M186 70c3-4 8-5 12-4v14h-11z" fill="#3a5a2a"/>
</g>
<!-- top-right arching tree -->
<g filter="url(#hfo)">
<path d="M123 30c0-6 2-10 6-13 2-5 6-9 11-12 4-3 9-5 15-5h43v68c-3-3-5-7-5-11 2-5 1-10-2-14 1-6-2-12-6-17-3-6-8-10-14-12-6-3-13-3-19-1-6 0-11 2-15 7-5 2-8 6-10 11-2 1-3 1-4-1z" fill="#38461f"/><path d="M150 6c5-3 12-4 18-2l-2 8c-5-1-10 0-14 2z" fill="#2c3818" opacity=".8"/>
<path d="M140 4c6-3 14-4 22-3 8 0 16 2 22 6l-4 5c-8-3-16-4-24-3-6 0-12 2-16 5z" fill="#566a2a" opacity=".85"/>
<path d="M176 8c8 3 14 9 18 16l4 14v-30z" fill="#2c3a18"/>
<path d="M184 14l10 22" stroke="#2a2416" stroke-width="1.600"/>
<path d="M155 24c4-2 8-3 12-2M158 28c3-2 7-3 10-3" stroke="#55583e" stroke-width=".5" fill="none" opacity=".7"/>
<path d="M191 52c3 2 5 6 7 10v-16c-3 1-6 3-7 6z" fill="#33441e"/>
</g>
</g>
</svg>
</div>
<div class="abs cd ye" style="left:1479.2px;top:713.6px;width:535.6px;height:1120.4px"><b class="t">MAC - Engineer</b>She's a cyborg. A human torso with robotic limbs. Intricate details with tons
of tiny moving parts.

Fullname: Mackenzie

1. She did this alteration willingly. Cause she wanted to make more
money. She thought she'd be able to find more work. And she did. She's
secretly missing that aspect of her humanity. But she could never admit
that to herself.
2. She has no problem telling you what to do.
3. She's a lesbian
4. She thought about having one of her eyes replaced with a mechanical
eye.
5. She met Zed after he got into a fist fight with her previous captain.
6. Zed promises her a high wage, but he never comes up with the money.
She doesn't know why she stays. Mostly spite.
7. Surly, impolite, speaks her mind. Blunt.
8. In her arms:
    A. Tiny crossbows
    B. Wrenches, screwdrivers
    C. Knives
    D. Lighter
9. In her legs:
    A. Saws
    B. Ice Skate blades
    C. Crossbow bolts
    D. Cutlery
    E. Flask of Scotch
    F. Chisel
    G. Crowbar
    H. Wratchet Strap
10. She has loving parents, who encouraged her independence. They're
happy for her, but they haven't seen her in a long time.
11. Only child.
12. Has an older sibling who was far more successful in school and life.
Mac has always been playing catch up.
13. She grew up with her grandparents. Didn't know her parents.
14. Grew up on an Airship. Not as nice as the Snapberry, but far bigger.
she learned to fix that ship as a kid and hasn't stopped since.
15. She really is one of the greatest mechanics in the Stretch.
16. She's jealous of Trish's physical strength. Mac has had to work so hard
for her abilities, even sacrifice her limbs. And Trish doesn't even seem to
understand or appreciate what she has.
17. She knew Jeris from her last ship, and didn't like him there either.
18. Jeris introduced her to Zed and he told Zed how great a mechanic she
was. She was reluctant and Zed was desperate (being chased by
someone he'd just ripped off) so she got a big wage out of him.
19. She doesn't really "get" Dax. They stay out of each other's way, but
there's still an underlying respect there. Like they're the two honest people
here, hiding among the dishonest.
20. She doesn't trust magic. It's like machinery without the machine. If you
can't see how it works, right in front of you, then it's not a good thing.
21. She wants to earn enough money to buy her own ship one day. (an
later where she figures she'll just steal her own ship like Zed did)
22. She'd make a bad manager / captain with her lack of delicate social
skills.</div>
<div class="abs cd rd" style="left:2040px;top:713.6px;width:369.2px;height:840.4px"><b class="t"><span style="color:#fff">JERIS - Nuisance</span></b>
1. Little red devil man.
2. Stoner
3. Vestigial sort of wings. They might slow a fall, but
not enough to make a difference.
4. Didactic, always want to tell a story to drop some
insight and wisdom.
5. Lazy as all hell.
6. Amazing dexterity. Great with small things around the
ship. Knots.
7. Incredible eye sight, he's the best one on the ship by
far.
8. Sarcastic.
9. Very sweet. Worries about everyone.
10. Selfish.
11. Steals - even from Zed. This is the pickpocket that picks
the pockets of other pickpockets.
12. He's no good in a physical fight.
13. His frail body gets him into trouble. He's always aching
from old injuries.
14. He gets hurt a lot.
15. He admires Trish's physical strength.
16. Loves Zed's fighting spirit.
17. Met Zed while taking bets on a bar fight. Zed won.
When Zed found out Jeris was making money off his
own fight, he knew he'd found a great crew member.
18. He met Zed when Zed stole this ship from its previous
owner. Jeris was... passed out in the cargo hold. And just
became part of the crew.
19. Zed constantly threatens to throw Jeris off the ship at
the next island. Jeris never takes this seriously. Zed might
mean it just a little bit.
20. He comes from a race of gremlin-like creatures known
for messing up airship engines. He's not like that. In
fact, that's a stereotype of his people.
21. Refined, tea-drinking, royal British accent.
22. Appreciates everyone's qualities. Even Great
Warlocks.</div>
<div class="abs cd ye" style="left:1479.2px;top:1861.6px;width:535.6px;height:812px"><span class="pg">Page Goal<b>17</b></span><b class="t">MAC</b><svg style="position:absolute;left:19.400px;top:39.800px;width:494.400px;height:663.200px"><use href="#mac" width="100%" height="100%"/></svg></div>
<div class="abs cd rd" style="left:2040px;top:1912px;width:369.2px;height:761.6px"><b class="t"><span style="color:#fff">JERIS - Nuisance</span></b><svg style="position:absolute;left:-2.200px;top:-2.200px;width:369.200px;height:761.600px" viewBox="1092.700 545 92.300 190.400" preserveAspectRatio="none">
<path d="M1175 592.500c-3-.3-6 1.500-7.500 4.500-1.200 3-.5 6 2 8 1.500 1.200 3.500 1.800 5.500 1.800z" fill="#ee2424" stroke="#0a0000" stroke-width="1.200"/>
<path d="M1171.500 597.500c1-.8 2.300-.8 3.500 0v3.200c-1.500 0-2.800-.8-3.500-3.200z" fill="#0a0000"/>
<path d="M1175 691c-2.500 3.500-5.500 6.500-9 8.300-3.500 1.200-7 1.700-10.500 2.200-4.500.8-8.500 3.300-11.500 7-.8 1.200-.6 2 .3 2.200 2.700-2.200 5.700-4 9-5.200-2.500 2.300-4.500 5-5.800 8-.3 1.300.3 2 1.300 1.600 1.700-3 4-5.600 6.800-7.600-1.300 2.300-2.300 4.700-2.700 7.200.2 1 1 1.200 1.700.5 1.200-3.300 3.200-6.200 6-8.300 3.400-.6 6.800-1.500 10-3 1.700-.9 3.200-2 4.400-3.400z" fill="#ee2424" stroke="#0a0000" stroke-width="1.200" stroke-linejoin="round"/>
</svg></div>
<div class="abs cd g" style="left:26.4px;top:1658px;width:535.2px;height:583.6px"><b class="t">RANDOM</b><span class="dim">1. Hates her kids' friends. Tattoos and weird haircuts.
2. <b>Secretly worries about Riley not making it. She can't admit this to
herself. Her darkest secret.</b>
3. Great at her job.
4. Gets fired from her job through no fault of her own.
5. Terrible at her job. Mostly because she's a single mom and struggling
with Riley.
6. No college.
7. <b>Deadbeat husband.</b>
8. <b>Went to elite college. Stopped working when she got married to
take care of the kids. Divorce went really bad and she had to start
over.</b>
9. Drinking problem.
10. Gambling problem.
11. After college, she was a powerhouse career woman, caught up in a
scandal, can't work in her industry anymore. Now she has to:
    a. <b>drive a forklift</b>
    b. work in fastfood.
12. <b>She gets fired for abusing the forklift. She's weak enough that she
was using the forklift to lift something no one else would have used it
for.</b>
13. <b>Her firing isn't totally legal.</b>
14. <b>She found out about Riley's cancer after Riley got a concussion
in softball. It was just luck they discovered leukemia.</b>
15. She has a handicap placard for her car, but she refuses to use it.
16. She hasn't seen her ex in years. Still can't understand why he left.
17. She hates her ex. Won't let him near the kids.
18. <b>Her only means of relaxing is watching TV - only fantasy and scifi.
Junkie for bad fantasy shows.</b></span></div>
<div class="abs cd g" style="left:78px;top:2269.2px;width:397.6px;height:313.6px"><b class="t">Other potential jobs for Trish</b>1. Waitress
2. Proctologist
3. Nurse
4. Special Education Teacher (sign language?)
5. Defense contractor (works on ships)
6. Meteorologist
7. Scientist
8. Architect
9. Deckhand on a cruise ship
10. Bartender
11. Computer programmer

Afraid of flying, heights
Hates travel</div>
<div class="abs hd" style="left:25.2px;top:2624.8px;width:1274.8px;height:46px">PLOT</div>
<div class="abs cd vi" style="left:52.8px;top:2703.2px;width:533.6px;height:174.8px;border:5.2px solid #111"><span class="pg">Page Goal<b>1</b></span><b class="t">TEASER</b>Tease flavor of the show
Stakes
Theme
Mood
Tone
Provide contrast to the main character's status quo</div>
<div class="abs cd sa" style="left:636.4px;top:2700.4px;width:408px;height:205.6px"><span class="pg">Page Goal<b>1</b></span><b class="t">Deanna</b>Escaping from someone/something. We don't see what.
It's a harrowing attempt at a complex spell. It's not
going well. she's down to her last ingredients.
says the words to get her to the hero who could save
them.
She jumps through the portal just as it closes.</div>
<div class="abs cd ye" style="left:691.2px;top:2906px;width:353.6px;height:74px"><span class="pg">Page Goal<b>3</b></span><b class="t">Spell Damages Portal</b>Deanna damages the portal in defending herself</div>
</div>
<!--BOARD-END-->
</div>

<!-- STATUS BAR -->
<div id="sb" class="abs">
  <div class="abs" style="left:33.400px;top:0.500px;font-size:6.600px;color:#222">1 of 54</div>
  <div class="abs" style="left:86.200px;top:0.500px;font-size:6.200px;color:#222">No Scene</div>
  <div class="abs" style="left:354.300px;top:0;font-size:7.720px;color:#1c1c1c">[0] General [1] Scene Heading [2] Action [3] Character [4] Parenthetical [5] Dialogue [6] Transition [7] Shot [8] Cast List [9] New Act [:] End of Act</div>
  <svg class="abs" style="left:1087.500px;top:2.300px" width="7.600" height="9.600" viewBox="0 0 7.600 9.600"><rect x="2.400" y=".2" width="2.800" height="5.400" rx="1.400" fill="#1a1a1a"/><path d="M.7 4.300c0 2 1.300 3.200 3.100 3.200s3.100-1.200 3.100-3.200M3.800 7.500v1.700" stroke="#1a1a1a" stroke-width=".9" fill="none"/></svg>
  <svg class="abs" style="left:1110.500px;top:2.300px" width="8" height="9" viewBox="0 0 8 9"><path d="M2.300.3c2.600.1 4.700 2 4.700 4.300S5 8.600 2.400 8.700c-.7 0-1.300-.1-1.900-.4 2-.5 3.500-2.100 3.500-4S3.300 1 1.600.5c.2-.1.500-.2.700-.2z" fill="#1a1a1a"/></svg>
  <div class="abs" style="left:1132.500px;top:5.700px;width:12px;height:1.600px;background:#2f8bf5;border-radius:1px"></div>
  <div class="abs" style="left:1143px;top:2.700px;width:7.400px;height:7.400px;border-radius:50%;background:#fff;box-shadow:0 .3px 1px rgba(0,0,0,.35)"></div>
</div>

</div>
<div class="abs wm" style="-webkit-text-stroke:3.400px #000;text-shadow:1px 1.500px 0 #000,1.800px 2.400px 0 #000">www.mac-gm.com</div>
<div class="abs wm" style="-webkit-text-stroke:0.550px #fff">www.mac-gm.com</div>
</body>
</html>
